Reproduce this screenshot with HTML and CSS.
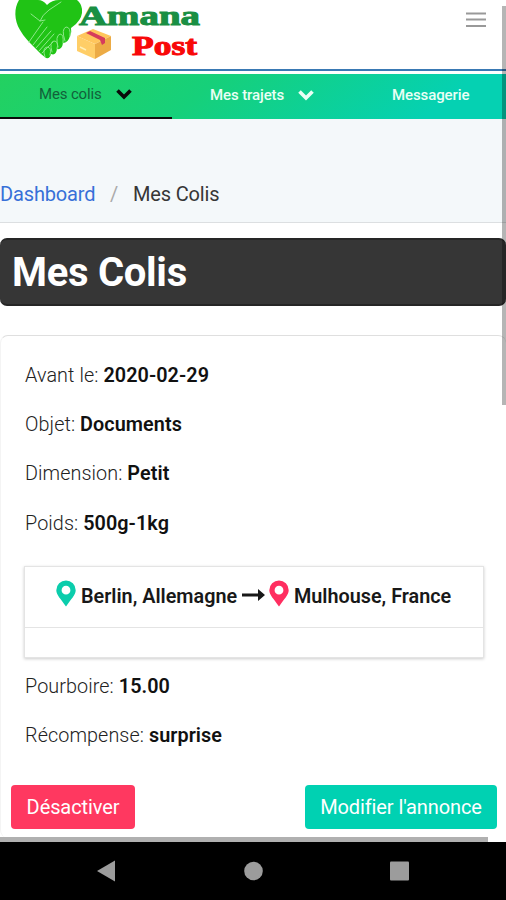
FILE: index.html
```html
<!DOCTYPE html>
<html lang="fr">
<head>
<meta charset="utf-8">
<meta name="viewport" content="width=device-width">
<title>Mes Colis</title>
<link rel="stylesheet" href="styles.css">
</head>
<body>
<div class="screen">
  <header class="header">
    <svg class="logo" viewBox="0 0 206 66" width="206" height="66">
      <path fill="#20c315" d="M19 0C14 8 14 20 20 30C24 37 29 42 34 47L41 54L46 58Q50 59 51 54Q56 56 57 49Q62 50 63 43Q68 43 70 36Q72 32 71 28L76 24Q83 17 82 9Q81 3 77 0H59Q52 0 47 5Q43 0 38 0Z"/>
      <g fill="none" stroke="#8de889" stroke-width="1" stroke-linecap="round" stroke-linejoin="round">
        <path d="M31 14L40 21L45 20M40 21Q42 15 49 10L61 2M43 22L29 42M33 45L47 27M36 48L51 31M39 51L54 34M42 53L53 42"/>
        <path d="M45 57Q42 48 47 47Q52 47 50 55M52 52Q49 42 54 41Q59 41 57 49M58 47Q55 36 60 34Q64 34 63 43M65 41Q61 29 66 27Q71 27 70 36"/>
      </g>
      <path fill="#ffc65c" d="M77 36L93 29L111 36L95 44Z"/>
      <path fill="#ffce67" d="M77 36L95 44V59L77 51Z"/>
      <path fill="#ecab45" d="M95 44L111 36V50L95 59Z"/>
      <path fill="#d63c5c" d="M86 33L90 31L105 38V43L102 45L100 40Z"/>
      <path d="M80 47L86 50" stroke="#fff0b8" stroke-width="1.5"/>
      <text class="logo-name" x="79" y="25" textLength="121" lengthAdjust="spacingAndGlyphs">Amana</text>
      <text class="logo-post" x="132" y="55" textLength="65" lengthAdjust="spacingAndGlyphs">Post</text>
    </svg>
    <svg class="burger" viewBox="0 0 20 16" width="20" height="16"><path d="M0 1.5H20M0 7.5H20M0 14H20" stroke="#999" stroke-width="1.8"/></svg>
  </header>
  <nav class="tabs">
    <a class="tab tab-active"><span class="t-colis">Mes colis</span><svg width="16" height="12" viewBox="0 0 16 12"><path d="M1.500 2.5L8 9L14.500 2.5" fill="none" stroke="currentColor" stroke-width="3.6"/></svg></a>
    <a class="tab tab-trips"><span class="t-trajets">Mes trajets</span><svg width="16" height="12" viewBox="0 0 16 12"><path d="M1.500 2.5L8 9L14.500 2.5" fill="none" stroke="currentColor" stroke-width="3.6"/></svg></a>
    <a class="tab tab-msg"><span class="t-msg">Messagerie</span></a>
  </nav>
  <div class="crumbs"><a class="crumb-link">Dashboard</a><span class="slash">/</span><span class="crumb-here">Mes Colis</span></div>
  <main class="content">
    <h1 class="title"><span>Mes Colis</span></h1>
    <section class="card">
      <p class="row">Avant le: <b>2020-02-29</b></p>
      <p class="row">Objet: <b>Documents</b></p>
      <p class="row">Dimension: <b>Petit</b></p>
      <p class="row">Poids: <b>500g-1kg</b></p>
      <div class="route">
        <div class="route-line">
          <svg class="pin pin-from" viewBox="0 0 20 27" width="20" height="27"><path fill="currentColor" fill-rule="evenodd" d="M10 0.5A9.7 9.7 0 0 0 .3 10.2C.3 15 5 19 10 26.5C15 19 19.7 15 19.7 10.2A9.7 9.7 0 0 0 10 .5ZM10 5.8A4.4 4.4 0 1 1 10 14.6A4.4 4.4 0 0 1 10 5.8Z"/></svg>
          <span class="from">Berlin, Allemagne</span>
          <svg class="arrow" viewBox="0 0 23 12" width="23" height="12"><path d="M0 4.5H16V0L23 6L16 12V7.5H0Z" fill="#181818"/></svg>
          <svg class="pin pin-to" viewBox="0 0 20 27" width="20" height="27"><path fill="currentColor" fill-rule="evenodd" d="M10 0.5A9.7 9.7 0 0 0 .3 10.2C.3 15 5 19 10 26.5C15 19 19.7 15 19.7 10.2A9.7 9.7 0 0 0 10 .5ZM10 5.8A4.4 4.4 0 1 1 10 14.6A4.4 4.4 0 0 1 10 5.8Z"/></svg>
          <span class="to">Mulhouse, France</span>
        </div>
        <div class="route-foot"></div>
      </div>
      <p class="row">Pourboire: <b>15.00</b></p>
      <p class="row">Récompense: <b>surprise</b></p>
      <div class="actions"><button class="btn btn-off">Désactiver</button><button class="btn btn-edit">Modifier l'annonce</button></div>
    </section>
  </main>
  <div class="hscroll"></div>
  <footer class="sysbar">
    <svg width="506" height="58" viewBox="0 0 506 58"><g fill="#9c9c9c"><path d="M97 29L115 18.500V39.500Z"/><circle cx="253.500" cy="29" r="9.300"/><rect x="390" y="19.500" width="19" height="19" rx="1"/></g></svg>
  </footer>
  <div class="vscroll"></div>
</div>
</body>
</html>
```
FILE: styles.css
```css
* { box-sizing: border-box; }
body { margin: 0; background: #fff; font-family: Roboto, "Liberation Sans", sans-serif; color: #333; }
.screen { position: relative; width: 506px; height: 900px; overflow: hidden; display: flex; flex-direction: column; }
.header { height: 71px; flex: none; display: flex; justify-content: space-between; border-bottom: 2px solid #3979b4; }
.logo { display: block; }
.logo-name, .logo-post { font-family: "Liberation Serif", serif; font-weight: 700; stroke-width: 1; }
.logo-name { font-size: 27px; fill: #198f43; stroke: #198f43; }
.logo-post { font-size: 27px; fill: #f80808; stroke: #f80808; }
.burger { margin: 12px 20px 0 0; }
.tabs { flex: none; height: 45px; margin-top: 3px; display: flex; background: linear-gradient(141deg, #23d160 0%, #16d07a 40%, #05d1b2 85%); font-size: 15px; font-weight: 500; color: #eafff5; }
.tab { display: flex; align-items: center; height: 45px; padding-bottom: 3px; }
.tab svg { display: block; }
.tab-active { width: 172px; padding-left: 39px; gap: 14px; border-bottom: 2px solid #0a0a0a; color: #0a0a0a; }
.t-colis { width: 63px; white-space: nowrap; color: #12603a; font-weight: 400; letter-spacing: -.15px; }
.tab-trips { width: 220px; padding-left: 38px; gap: 14px; }
.t-trajets { letter-spacing: -.1px; }
.t-msg { letter-spacing: -.1px; }
.crumbs { flex: none; height: 104px; padding-top: 46px; background: #f4f8fa; border-bottom: 1px solid #dcdfe1; display: flex; align-items: center; font-size: 20px; line-height: 24px; letter-spacing: -.15px; color: #363636; }
.crumb-link { color: #3770d8; width: 95px; }
.slash { width: 38px; text-align: center; color: #aaa; }
.content { flex: none; height: 614px; padding-top: 15px; }
.title { margin: 0 0 29px; height: 68px; padding: 0 12px; display: flex; align-items: center; background: #363636; border: 2px solid #262626; border-width: 2px 0; border-radius: 7px; font-size: 40px; font-weight: 700; letter-spacing: -.3px; color: #fff; }
.card { height: 503px; padding: 28px 10px 0; border-top: 1px solid #dfdfdf; border-left: 1px solid #f4f4f4; border-radius: 8px; }
.row { margin: 0 15px 25.2px 14px; line-height: 24px; font-size: 19.8px; font-weight: 300; letter-spacing: .08px; color: #222; }
.row b { font-weight: 600; color: #111; }
.route { margin: 30px 12px 17px 13px; height: 92px; border: 1px solid #e4e4e4; box-shadow: 0 1px 3px #ccc; }
.route-line { height: 61px; padding-left: 31px; display: flex; align-items: center; font-size: 19.8px; font-weight: 600; color: #181818; border-bottom: 1px solid #e4e4e4; white-space: nowrap; }
.pin { flex: none; margin-top: -6px; }
.pin-from { color: #0bcdac; margin-right: 5px; }
.pin-to { color: #ff2e60; margin: -6px 5px 0 4px; }
.from { width: 157px; }
.arrow { flex: none; margin-left: 4px; margin-top: -3px; }
.actions { display: flex; justify-content: space-between; margin: 37px -1px 0 0; }
.btn { height: 44px; padding: 0; border: 0; border-radius: 4px; font: 400 20px/44px Roboto, sans-serif; letter-spacing: -.1px; color: #fff; }
.btn-off { width: 124px; background: #ff3860; }
.btn-edit { width: 192px; background: #00d1b2; }
.hscroll { flex: none; width: 488px; height: 5px; background: #b0b0b0; }
.sysbar { flex: none; height: 58px; background: #000; }
.sysbar svg { display: block; }
.vscroll { position: absolute; left: 502px; top: 6px; width: 4px; height: 399px; background: rgba(0, 0, 0, .29); }
```
